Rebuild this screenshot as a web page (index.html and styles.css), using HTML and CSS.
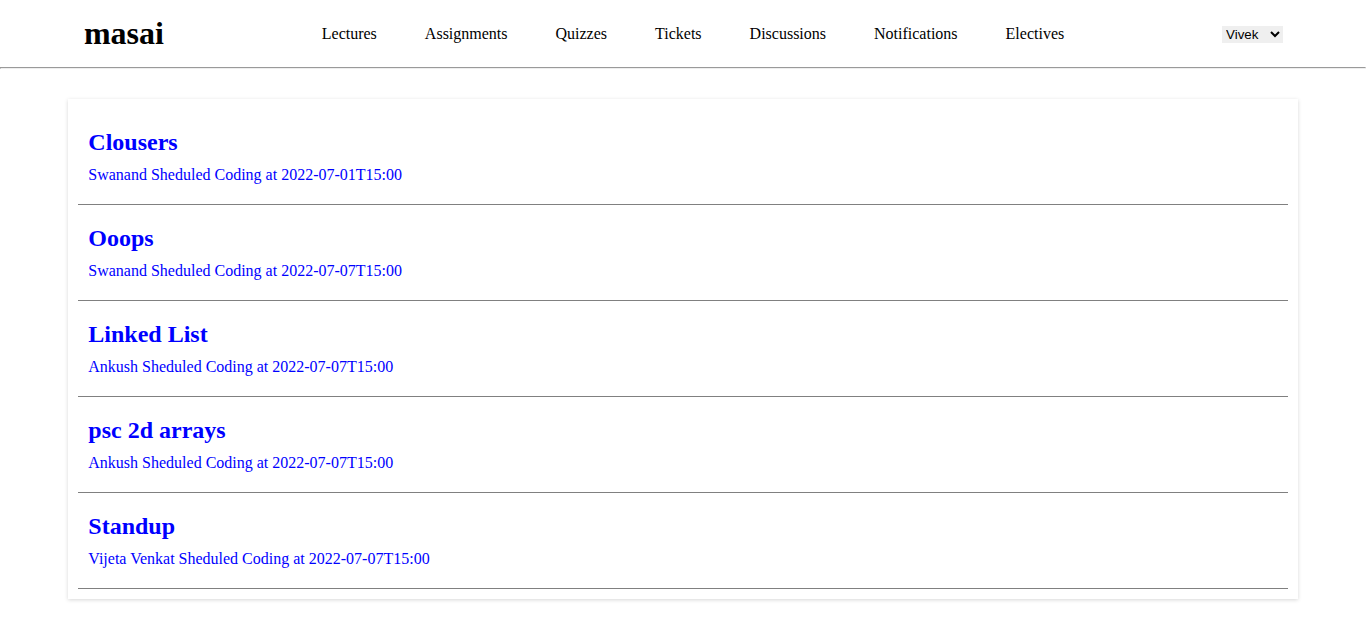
FILE: index.html
```html
<!DOCTYPE html>
<html lang="en">
<head>
<meta charset="utf-8">
<title>masai</title>
<link rel="stylesheet" href="styles.css">
</head>
<body>
<header class="navbar">
  <h1 class="logo">masai</h1>
  <nav class="links">
    <a href="#lectures">Lectures</a>
    <a href="#assignments">Assignments</a>
    <a href="#quizzes">Quizzes</a>
    <a href="#tickets">Tickets</a>
    <a href="#discussions">Discussions</a>
    <a href="#notifications">Notifications</a>
    <a href="#electives">Electives</a>
  </nav>
  <div class="account">
    <select class="user" aria-label="Account">
      <option>Vivek</option>
      <option>Logout</option>
    </select>
  </div>
</header>
<hr class="rule">
<main class="card">
  <a class="item" href="#clousers">
    <h2>Clousers</h2>
    <p>Swanand Sheduled Coding at 2022-07-01T15:00</p>
  </a>
  <a class="item" href="#ooops">
    <h2>Ooops</h2>
    <p>Swanand Sheduled Coding at 2022-07-07T15:00</p>
  </a>
  <a class="item" href="#linked-list">
    <h2>Linked List</h2>
    <p>Ankush Sheduled Coding at 2022-07-07T15:00</p>
  </a>
  <a class="item" href="#psc">
    <h2>psc 2d arrays</h2>
    <p>Ankush Sheduled Coding at 2022-07-07T15:00</p>
  </a>
  <a class="item" href="#standup">
    <h2>Standup</h2>
    <p>Vijeta Venkat Sheduled Coding at 2022-07-07T15:00</p>
  </a>
</main>
</body>
</html>
```

FILE: styles.css
```css
* {
  box-sizing: border-box;
}

body {
  margin: 0;
  padding-bottom: 20px;
  background: #fff;
  color: #000;
  font-family: "Liberation Serif", "Times New Roman", serif;
  font-size: 16px;
  line-height: 18px;
}

h1,
h2,
p {
  margin: 0;
}

.navbar {
  display: flex;
  align-items: center;
  justify-content: space-around;
  padding: 15px 4px 15px 5px;
}

.logo {
  font-size: 32px;
  line-height: 37px;
}

.links {
  display: flex;
  gap: 48px;
}

.links a {
  color: #000;
  text-decoration: none;
}

.user {
  border: none;
  background-color: #efefef;
  color: #000;
  font-family: "Liberation Sans", Arial, sans-serif;
  font-size: 13.3333px;
}

.rule {
  margin: 0;
}

.card {
  width: 90%;
  margin: 30px auto 0;
  padding: 10px;
  box-shadow: rgba(0, 0, 0, 0.16) 0 1px 4px;
}

.item {
  display: flex;
  flex-direction: column;
  gap: 10px;
  padding: 20px 10px;
  border-bottom: 1px solid gray;
  color: #00f;
  text-decoration: none;
}

.item h2 {
  font-size: 24px;
  line-height: 27px;
}
```
